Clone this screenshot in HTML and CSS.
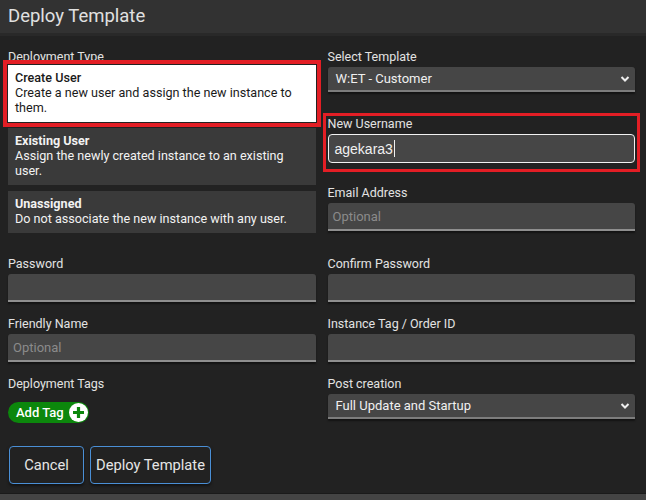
FILE: index.html
```html
<!DOCTYPE html>
<html lang="en">
<head>
  <meta charset="UTF-8">
  <meta name="viewport" content="width=device-width, initial-scale=1.0">
  <title>Deploy Template</title>
  <link rel="stylesheet" href="styles.css">
</head>
<body>

  <header class="title-bar">Deploy Template</header>

  <main class="form">

    <div class="top-grid">
      <div class="column">
        <div class="field-label type-label">Deployment Type</div>

        <div class="type-list">
          <div class="type-card is-selected marked">
            <div class="type-title">Create User</div>
            <div>Create a new user and assign the new instance to them.</div>
          </div>
          <div class="type-card">
            <div class="type-title">Existing User</div>
            <div>Assign the newly created instance to an existing user.</div>
          </div>
          <div class="type-card">
            <div class="type-title">Unassigned</div>
            <div>Do not associate the new instance with any user.</div>
          </div>
        </div>
      </div>

      <div class="column">
        <div class="field">
          <div class="field-label">Select Template</div>
          <div class="select">
            <span>W:ET - Customer</span>
            <svg class="chevron" width="10" height="8" viewBox="0 0 10 8"><path d="M1.5 2 L5 5.5 L8.5 2" fill="none" stroke="#eee" stroke-width="2"/></svg>
          </div>
        </div>

        <div class="field marked-box">
          <div class="field-label">New Username</div>
          <div class="input is-focused">agekara3<span class="caret"></span></div>
        </div>

        <div class="field">
          <div class="field-label">Email Address</div>
          <div class="input placeholder">Optional</div>
        </div>
      </div>
    </div>

    <div class="field-grid">
      <div class="field">
        <div class="field-label">Password</div>
        <div class="input"></div>
      </div>
      <div class="field">
        <div class="field-label">Confirm Password</div>
        <div class="input"></div>
      </div>

      <div class="field">
        <div class="field-label">Friendly Name</div>
        <div class="input placeholder">Optional</div>
      </div>
      <div class="field">
        <div class="field-label">Instance Tag / Order ID</div>
        <div class="input"></div>
      </div>

      <div class="field">
        <div class="field-label">Deployment Tags</div>
        <div class="tag-row">
          <span class="add-tag">
            Add Tag
            <svg class="plus" width="19" height="19" viewBox="0 0 19 19">
              <circle cx="9.5" cy="9.5" r="9.5" fill="#fff"/>
              <path d="M9.5 4 V15 M4 9.5 H15" stroke="#0c870c" stroke-width="3.2"/>
            </svg>
          </span>
        </div>
      </div>
      <div class="field">
        <div class="field-label">Post creation</div>
        <div class="select post-select">
          <span>Full Update and Startup</span>
          <svg class="chevron" width="10" height="8" viewBox="0 0 10 8"><path d="M1.5 2 L5 5.5 L8.5 2" fill="none" stroke="#eee" stroke-width="2"/></svg>
        </div>
      </div>
    </div>

    <div class="actions">
      <button class="button">Cancel</button>
      <button class="button">Deploy Template</button>
    </div>

  </main>

  <footer class="bottom-bar"></footer>

</body>
</html>
```

FILE: styles.css
```css
* {
  margin: 0;
  padding: 0;

  box-sizing: border-box;
  font-family: 'Roboto', sans-serif;
}

body {
  display: flex;
  flex-direction: column;
  height: 100vh;

  background: #222222;
  color: #e2e2e2;
  overflow: hidden;
}

.title-bar {
  height: 36px;
  padding: 3px 8px 0;

  background: #323232;
  border-bottom: 3px solid #292929;

  font-size: 18.5px;
  line-height: 26px;
  color: #e0e0e0;
}

.form {
  flex: 1;
  padding: 13px 11px 0 8px;
}

.top-grid,
.field-grid {
  display: grid;
  grid-template-columns: 1fr 1fr;
  column-gap: 12px;
}

.field-grid {
  margin-top: 23px;
  row-gap: 14px;
}

.field-label {
  font-size: 12.5px;
  line-height: 16px;
  margin-bottom: 2px;
}

.type-label {
  margin-bottom: 0;
}

/* Deployment type cards */

.type-list {
  display: flex;
  flex-direction: column;
  gap: 6px;
}

.type-card {
  padding: 5px 6px 7px 7px;

  background: #3a3a3a;
  color: #f2f2f2;

  font-size: 12.6px;
  line-height: 15px;
}

.type-title {
  font-weight: 700;
}

.type-card.is-selected {
  background: #ffffff;
  color: #1a1a1a;
}

.type-card.is-selected .type-title {
  font-weight: 500;
}

/* red annotation frames from the screenshot */
.marked {
  outline: 4px solid #e31e25;
  outline-offset: 1px;
}

.marked-box {
  margin: 0 -2px;
  padding: 0 2px 6px;
  outline: 3px solid #e31e25;
}

/* Fields */

.column .field + .field {
  margin-top: 24px;
}

.column .marked-box + .field {
  margin-top: 16px;
}

.input,
.select {
  display: flex;
  align-items: center;
  height: 28px;
  padding: 0 9px;

  background: #464646;
  border-bottom: 2px solid #8f8f8f;
  border-radius: 3px 3px 0 0;
  box-shadow: 0 2px 2px rgba(0, 0, 0, 0.45);

  font-family: 'Liberation Sans', Arial, sans-serif;
  font-size: 14px;
  color: #f0f0f0;
}

.select {
  height: 25px;
  justify-content: space-between;
  padding: 0 5px 0 8px;
  font-size: 13px;
  border-bottom-color: #7d7d7d;
}

.post-select {
  margin-top: 1px;
}

.input.is-focused {
  height: 29px;
  padding-left: 6px;
  border: 1px solid #f2f2f2;
  border-radius: 4px;
  box-shadow: none;
}

.caret {
  width: 1px;
  height: 17px;
  margin-left: 1px;
  background: #f0f0f0;
}

.input.placeholder {
  font-family: 'Roboto', sans-serif;
  font-size: 13px;
  color: #8b8b8b;
  padding-left: 5px;
}

.chevron {
  flex: none;
}

/* Tags */

.tag-row {
  padding-top: 8px;
}

.add-tag {
  display: inline-flex;
  align-items: center;
  gap: 5px;
  height: 21px;
  padding: 0 1px 0 8px;

  background: #0c870c;
  border-radius: 11px;

  font-size: 13px;
  font-weight: 500;
  color: #ffffff;
}

/* Buttons */

.actions {
  display: flex;
  gap: 6px;
  margin-top: 23px;
  padding-left: 1px;
}

.button {
  height: 38px;
  padding: 0 5px;

  background: #222222;
  border: 1px solid #4a8fd6;
  border-radius: 4px;
  box-shadow: 0 2px 3px rgba(0, 0, 0, 0.5);

  font-size: 14.7px;
  color: #e6e6e6;
}

.button:first-child {
  width: 75px;
}

.bottom-bar {
  height: 7px;
  background: #444444;
  border-top: 1px solid #1a1a1a;
}
```
